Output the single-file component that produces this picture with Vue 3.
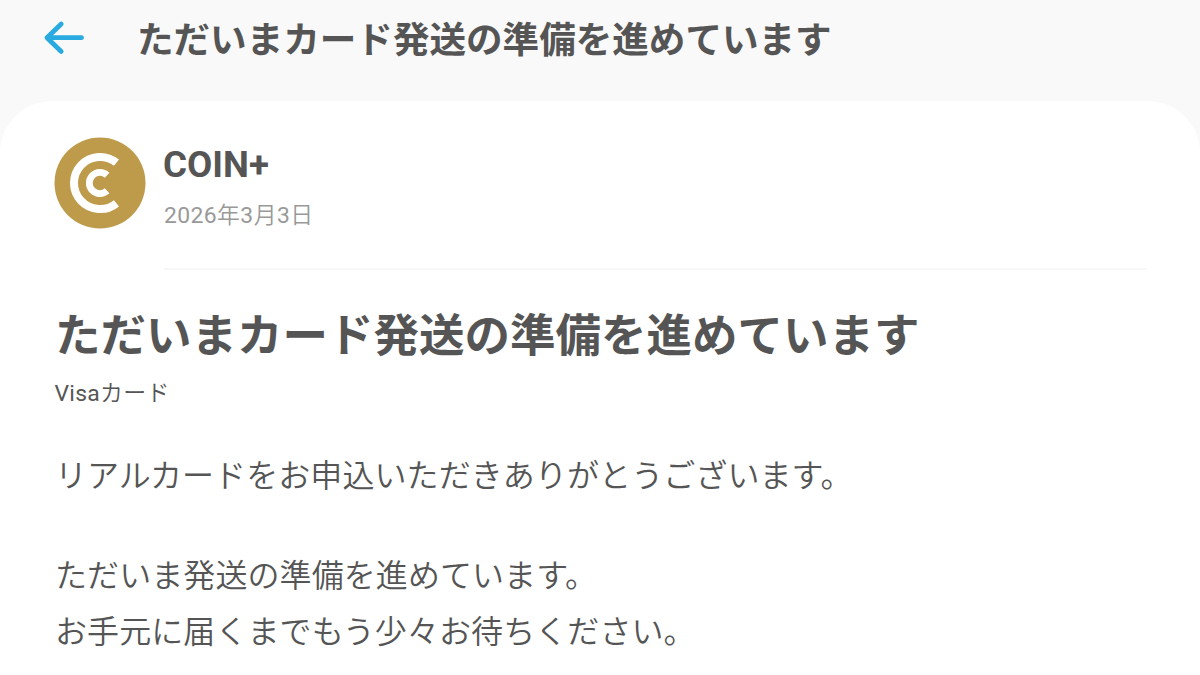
<template>
	<div class='screen'>
		<header class='topBar'>
			<button class='backBtn' type='button' aria-label='戻る'>
				<svg width='44' height='40' viewBox='0 0 44 40'>
					<path d='M19.2 6 L5 19.7 L19.2 33.4 M5 19.7 H39.5' />
				</svg>
			</button>
			<h1 class='barTitle'>{{ title }}</h1>
		</header>

		<main class='card'>
			<section class='sender'>
				<svg class='avatar' width='92' height='92' viewBox='0 0 92 92'>
					<circle class='disc' cx='46' cy='46' r='45.5' />
					<path class='ring' d='M62.5 25.7 A26.1 26.1 0 1 0 62.5 66.3' />
					<path class='ring inner' d='M53.1 38.2 A10.6 10.6 0 1 0 53.1 53.8' />
				</svg>
				<div class='senderInfo'>
					<div class='senderName'>{{ sender }}</div>
					<div class='date'>
						<span v-for='(part, i) in dateParts' :key='i' :class='{ latin: /\d/.test(part) }'>{{ part }}</span>
					</div>
				</div>
			</section>

			<article class='message'>
				<h2 class='messageTitle'>{{ title }}</h2>
				<div class='category'><span class='latin'>Visa</span>カード</div>
				<p v-for='(lines, i) in paragraphs' :key='i' class='paragraph'>
					<span v-for='line in lines' :key='line' class='line'>{{ line }}</span>
				</p>
			</article>
		</main>
	</div>
</template>

<script setup>
	const title = 'ただいまカード発送の準備を進めています'
	const sender = 'COIN+'
	const date = '2026年3月3日'

	// digits and kanji have different weights
	const dateParts = date.match(/\d+|\D+/g)

	const paragraphs = [
		['リアルカードをお申込いただきありがとうございます。'],
		['ただいま発送の準備を進めています。', 'お手元に届くまでもう少々お待ちください。'],
	]
</script>

<style>
	body{ margin: 0; overflow: hidden; }
</style>

<style scoped>
	.screen{
		height: 675px;
		overflow: hidden;
		display: flex;
		flex-direction: column;
		background: #f9f9f9;
		color: #555;
		font-family: Roboto, 'Noto Sans CJK JP', sans-serif;
	}
	.topBar{
		height: 101px;
		flex: none;
		display: flex;
		align-items: flex-start;
		box-sizing: border-box;
		padding: 18px 0 0 42px;
	}
	.backBtn{
		width: 44px;
		height: 40px;
		padding: 0;
		border: 0;
		background: none;
	}
	.backBtn svg{
		display: block;
		fill: none;
		stroke: #29abe2;
		stroke-width: 4.8;
		stroke-linecap: round;
		stroke-linejoin: round;
	}
	.barTitle{
		margin: 2px 0 0 51px;
		font-size: 36.57px;
		line-height: 42px;
		font-weight: 700;
		white-space: nowrap;
	}
	.card{
		flex: 1;
		padding: 36px 53px 0 54px;
		border-radius: 52px 52px 0 0;
		background: #fff;
	}
	.sender{ display: flex; }
	.avatar{ flex: none; }
	.disc{ fill: #be9b4a; }
	.ring{
		fill: none;
		stroke: #fff;
		stroke-width: 8;
	}
	.inner{ stroke-width: 6.8; }
	.senderInfo{
		flex: 1;
		height: 131px;
		margin-left: 18px;
		border-bottom: 2px solid #f7f7f7;
	}
	.senderName{
		margin-top: 6px;
		margin-left: -1px;
		font-size: 36.7px;
		line-height: 44px;
		font-weight: 700;
	}
	.date{
		margin-top: 11px;
		font-size: 22.9px;
		line-height: 36px;
		font-weight: 350;
		letter-spacing: 0.4px;
		color: #999;
	}
	.latin{ font-weight: 400; }
	.messageTitle{
		margin: 34px 0 0 1px;
		font-size: 45.5px;
		line-height: 66px;
		font-weight: 700;
		white-space: nowrap;
	}
	.category{
		margin: 7px 0 0 0.5px;
		font-size: 22.9px;
		line-height: 34px;
		font-weight: 350;
		letter-spacing: 0.3px;
	}
	.paragraph{
		margin: 38px 0 0 1px;
		font-size: 32px;
		line-height: 55.5px;
		font-weight: 350;
		letter-spacing: 0.08px;
	}
	.paragraph + .paragraph{ margin-top: 44.5px; }
	.line{ display: block; }
</style>
